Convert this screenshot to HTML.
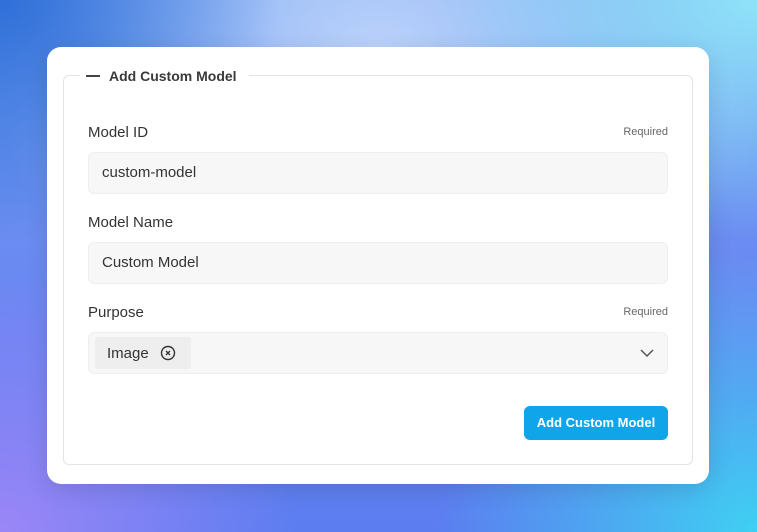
<!DOCTYPE html>
<html><head><style>
*{box-sizing:border-box;margin:0;padding:0}
body{width:757px;height:532px;overflow:hidden;font-family:"Liberation Sans",sans-serif;position:relative;
background:
radial-gradient(ellipse 300px 260px at 0% 100%, #9b86f7 0%, rgba(155,134,247,0) 100%),
radial-gradient(ellipse 320px 280px at 100% 100%, #3fd0f2 0%, rgba(63,208,242,0) 100%),
radial-gradient(ellipse 320px 240px at 100% 0%, #8fe3f8 0%, rgba(143,227,248,0) 100%),
radial-gradient(ellipse 280px 240px at 0% 0%, #2f6fd8 0%, rgba(47,111,216,0) 100%),
radial-gradient(ellipse 400px 300px at 50% 10%, #bcd3fb 0%, rgba(188,211,251,0) 100%),
linear-gradient(180deg,#6d9ef0,#6a86f2 60%,#5b7df0);}
.card{position:absolute;left:47px;top:47px;width:662px;height:437px;background:#fff;border-radius:14px;box-shadow:0 6px 24px rgba(0,0,0,.12)}
.fs{position:absolute;left:16px;top:28px;width:630px;height:390px;border:1px solid #e3e3e3;border-radius:6px}
.legend{position:absolute;left:16px;top:-10px;background:#fff;padding:0 12px 0 6px;font-weight:bold;font-size:14px;color:#3a3a3a;line-height:20px}
.legend span{display:inline-block;width:14px;height:2px;background:#444;vertical-align:middle;margin-right:9px;position:relative;top:-1px}
.lbl{position:absolute;left:41px;font-size:15px;color:#333}
.req{position:absolute;right:41px;font-size:11px;color:#666}
.inp{position:absolute;left:41px;width:580px;height:42px;background:#f7f7f7;border:1px solid #efefef;border-radius:6px;font-size:15px;color:#333;padding-left:13px;line-height:40px}
.chip{position:absolute;left:6px;top:4px;width:96px;height:32px;background:#eeeeee;border-radius:3px;font-size:15px;line-height:32px;padding-left:12px}
.btn{position:absolute;left:477px;top:359px;width:144px;height:34px;background:#0fa5e8;border-radius:6px;color:#fff;font-weight:bold;font-size:13px;text-align:center;line-height:34px}
</style></head><body>
<div class="card">
<div class="fs">
<div class="legend"><span></span>Add Custom Model</div>
</div>
<div class="lbl" style="top:77px">Model ID</div>
<div class="req" style="top:79px">Required</div>
<div class="inp" style="top:105px">custom-model</div>
<div class="lbl" style="top:167px">Model Name</div>
<div class="inp" style="top:195px">Custom Model</div>
<div class="lbl" style="top:257px">Purpose</div>
<div class="req" style="top:259px">Required</div>
<div class="inp" style="top:285px;padding:0">
<div class="chip" style="line-height:33px">Image
<svg style="position:absolute;left:65px;top:8px" width="16" height="16" viewBox="0 0 16 16"><circle cx="8" cy="8" r="6.5" fill="none" stroke="#333" stroke-width="1.4"/><path d="M6 6L10 10M10 6L6 10" stroke="#333" stroke-width="1.3"/></svg>
</div>
<svg style="position:absolute;right:12px;top:14px" width="16" height="12" viewBox="0 0 16 12"><path d="M2 3L8 9L14 3" fill="none" stroke="#555" stroke-width="1.5"/></svg>
</div>
<div class="btn">Add Custom Model</div>
</div>
</body></html>
